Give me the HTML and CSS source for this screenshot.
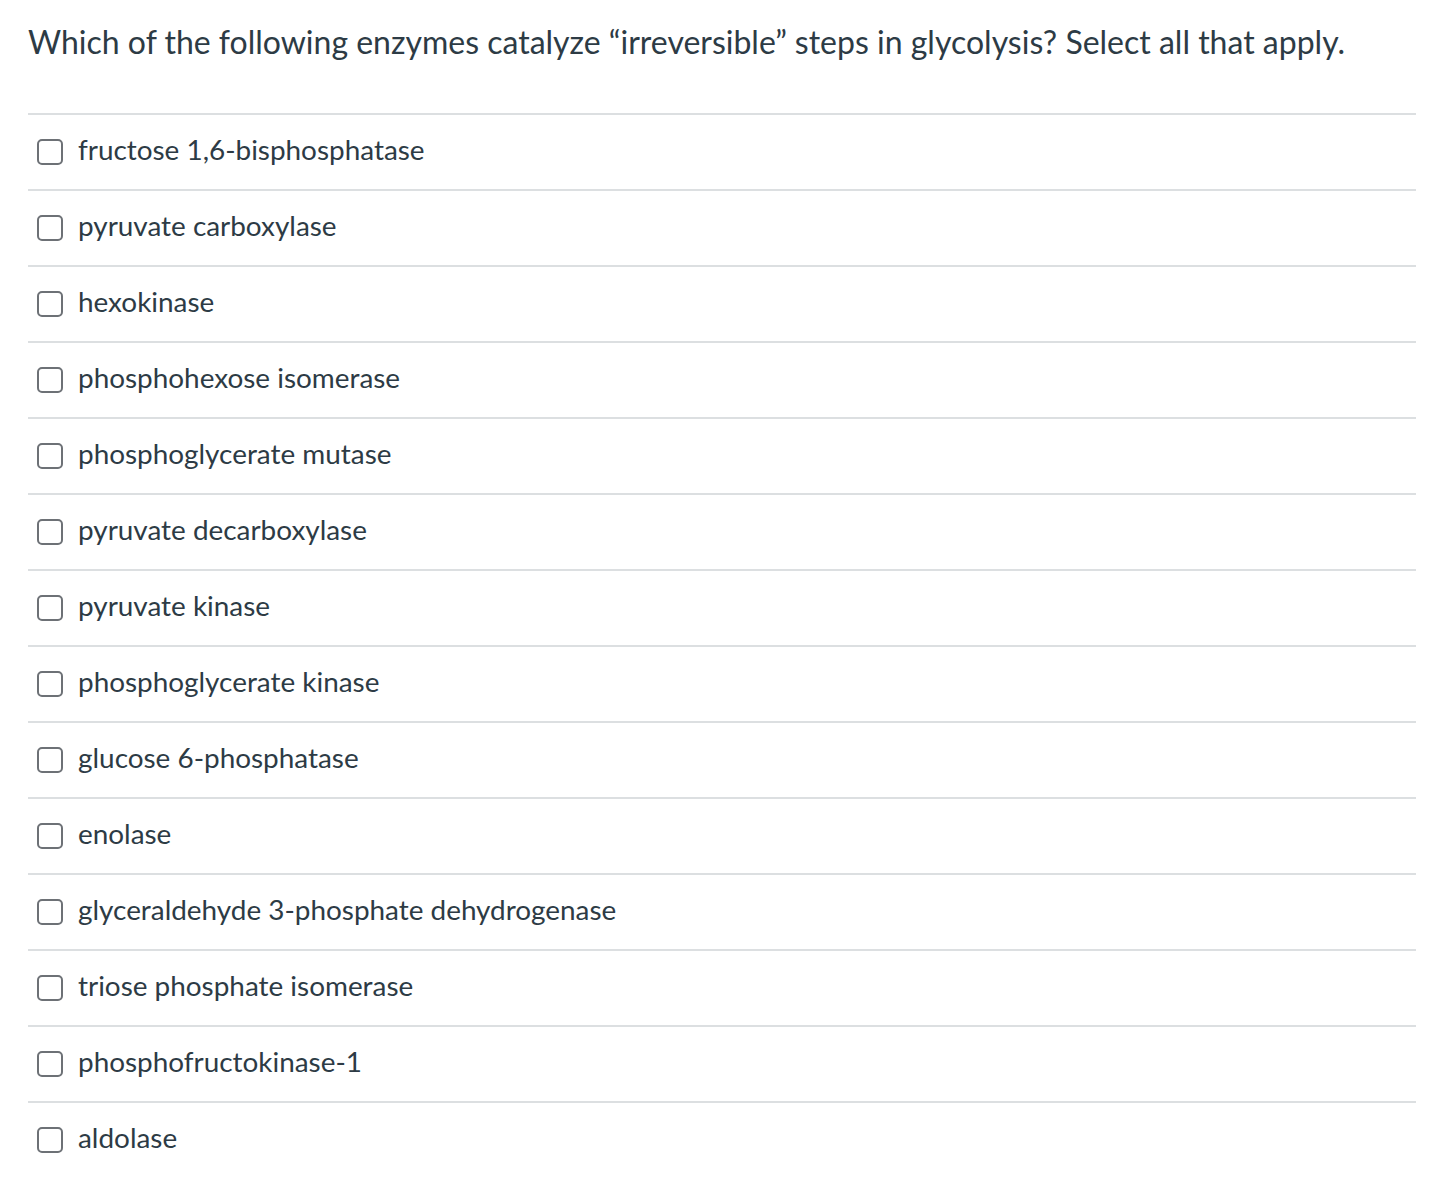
FILE: index.html
```html
<!DOCTYPE html>
<html>
<head>
<meta charset="utf-8">
<link rel="stylesheet" href="styles.css">
</head>
<body>
<div class="quiz">
  <p class="question">Which of the following enzymes catalyze “irreversible” steps in glycolysis? Select all that apply.</p>
  <ul class="answers">
    <li class="answer"><span class="box"></span><span class="label">fructose 1,6-bisphosphatase</span></li>
    <li class="answer"><span class="box"></span><span class="label">pyruvate carboxylase</span></li>
    <li class="answer"><span class="box"></span><span class="label">hexokinase</span></li>
    <li class="answer"><span class="box"></span><span class="label">phosphohexose isomerase</span></li>
    <li class="answer"><span class="box"></span><span class="label">phosphoglycerate mutase</span></li>
    <li class="answer"><span class="box"></span><span class="label">pyruvate decarboxylase</span></li>
    <li class="answer"><span class="box"></span><span class="label">pyruvate kinase</span></li>
    <li class="answer"><span class="box"></span><span class="label">phosphoglycerate kinase</span></li>
    <li class="answer"><span class="box"></span><span class="label">glucose 6-phosphatase</span></li>
    <li class="answer"><span class="box"></span><span class="label">enolase</span></li>
    <li class="answer"><span class="box"></span><span class="label">glyceraldehyde 3-phosphate dehydrogenase</span></li>
    <li class="answer"><span class="box"></span><span class="label">triose phosphate isomerase</span></li>
    <li class="answer"><span class="box"></span><span class="label">phosphofructokinase-1</span></li>
    <li class="answer"><span class="box"></span><span class="label">aldolase</span></li>
  </ul>
</div>
</body>
</html>
```
FILE: styles.css
```css
html, body {
  margin: 0;
  padding: 0;
  background: #ffffff;
}
body {
  font-family: Lato, "Noto Sans", sans-serif;
  color: #2d3b45;
}
.quiz {
  padding: 0 22px 0 28px;
}
.question {
  margin: 0;
  padding-top: 22px;
  font-size: 32px;
  line-height: 40px;
  height: 91px;
}
.answers {
  list-style: none;
  margin: 0;
  padding: 0;
}
.answer {
  display: flex;
  align-items: center;
  height: 74px;
  border-top: 2px solid #dcdfe1;
  padding-left: 9px;
}
.box {
  width: 22px;
  height: 22px;
  border: 2px solid #6d7176;
  border-radius: 5px;
  flex: none;
  margin-right: 15px;
}
.label {
  font-size: 27.9px;
  line-height: 34px;
  margin-top: -6px;
}
```
